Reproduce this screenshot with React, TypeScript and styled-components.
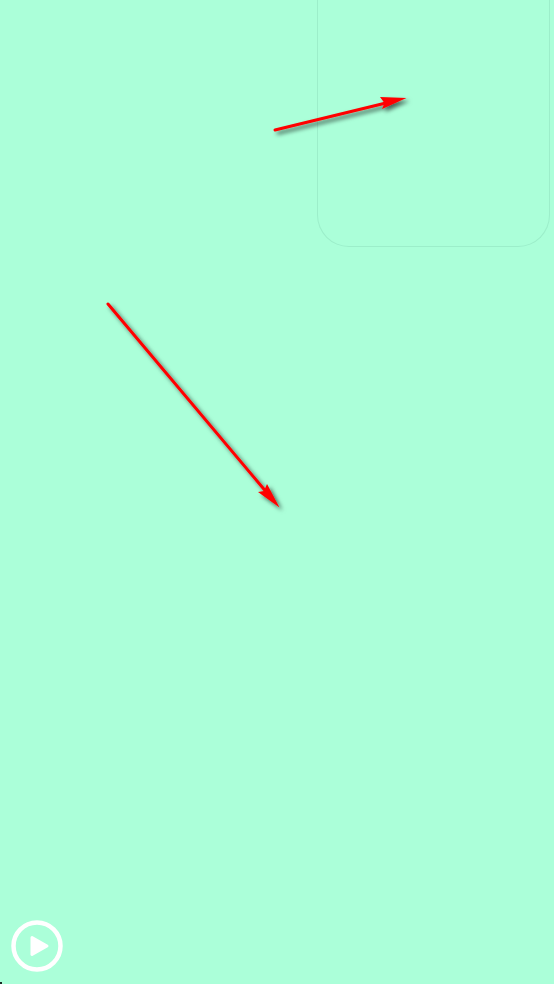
import React from "react";
import styled, { createGlobalStyle } from "styled-components";

const Global = createGlobalStyle`
  html, body { margin: 0; padding: 0; height: 100%; background: #abffd9; overflow: hidden; }
  #root { height: 100%; }
`;

const Stage = styled.main`
  position: relative;
  box-sizing: border-box;
  width: 554px;
  height: 984px;
  background: #abffd9;
  display: flex;
  flex-direction: column;
  justify-content: space-between;
  overflow: hidden;
`;

const Panel = styled.section`
  box-sizing: border-box;
  align-self: flex-end;
  width: 233px;
  height: 247px;
  margin-right: 4px;
  border: 1px solid #9ceeca;
  border-top: none;
  border-radius: 0 0 32px 32px;
`;

const PlayButton = styled.button`
  width: 52px;
  height: 52px;
  margin: 0 0 12px 11px;
  padding: 0;
  border: none;
  background: transparent;
  cursor: pointer;
  display: block;
`;

const Arrows = styled.svg`
  position: absolute;
  inset: 0;
  width: 554px;
  height: 984px;
  pointer-events: none;
`;

const CornerMark = styled.span`
  position: absolute;
  left: 0;
  bottom: 0;
  width: 2px;
  height: 2px;
  background: #1a2a24;
`;

export default function App() {
  return (
    <Stage>
      <Global />
      <Panel />
      <PlayButton aria-label="Play">
        <svg width="52" height="52" viewBox="0 0 52 52" fill="none">
          <circle cx="26" cy="26" r="23.5" stroke="#fff" strokeWidth="4.5" />
          <path d="M21 17.5 L36 26 L21 34.5 Z" fill="#fff" stroke="#fff" strokeWidth="3" strokeLinejoin="round" />
        </svg>
      </PlayButton>
      <Arrows viewBox="0 0 554 984">
        <defs>
          <filter id="arrowShadow" x="-20%" y="-20%" width="140%" height="140%">
            <feDropShadow dx="3" dy="3" stdDeviation="2" floodColor="#000" floodOpacity="0.6" />
          </filter>
        </defs>
        <g filter="url(#arrowShadow)" fill="#ff0000" stroke="#ff0000" strokeLinecap="round">
          <line x1="275" y1="130" x2="388" y2="102.5" strokeWidth="3" />
          <path d="M380 97 L406.5 98 L382 109 L384.5 103 Z" stroke="none" />
          <line x1="108" y1="304" x2="268" y2="494" strokeWidth="3" />
          <path d="M267 484 L279.5 507.5 L258 492 L264 491 Z" stroke="none" />
        </g>
      </Arrows>
      <CornerMark />
    </Stage>
  );
}
